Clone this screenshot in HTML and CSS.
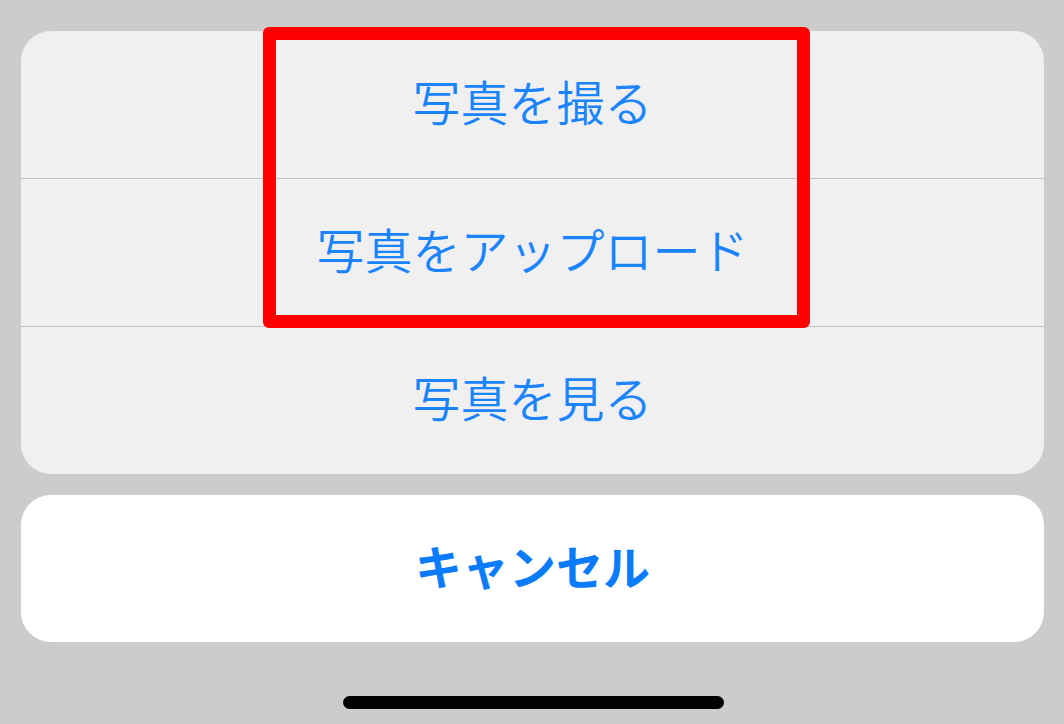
FILE: index.html
```html
<!DOCTYPE html>
<html lang="ja">
<head>
<meta charset="utf-8">
<link rel="stylesheet" href="styles.css">
</head>
<body>
<div class="screen">
  <div class="sheet">
    <div class="group">
      <div class="action">写真を撮る</div>
      <div class="sep"></div>
      <div class="action">写真をアップロード</div>
      <div class="sep"></div>
      <div class="action">写真を見る</div>
    </div>
    <div class="cancel">キャンセル</div>
  </div>
  <div class="home"></div>
  <div class="highlight"></div>
</div>
</body>
</html>
```
FILE: styles.css
```css
html, body {
  margin: 0;
  padding: 0;
  background: #cccccc;
}
.screen {
  position: relative;
  width: 1064px;
  height: 724px;
  overflow: hidden;
  font-family: "Noto Sans CJK JP", "Noto Sans", sans-serif;
}
.sheet {
  display: flex;
  flex-direction: column;
  gap: 21px;
  padding: 31px 20px 0 21px;
}
.group {
  background: #f0f0f0;
  border-radius: 30px;
  overflow: hidden;
  display: flex;
  flex-direction: column;
}
.action {
  height: 147px;
  box-sizing: border-box;
  padding-bottom: 9px;
  display: flex;
  align-items: center;
  justify-content: center;
  color: #1a84fc;
  font-size: 48px;
  font-weight: 350;
}
.sep {
  height: 1px;
  background: #c2c2c2;
}
.cancel {
  height: 147px;
  box-sizing: border-box;
  padding-bottom: 8px;
  background: #ffffff;
  border-radius: 30px;
  display: flex;
  align-items: center;
  justify-content: center;
  color: #0a7cfb;
  font-size: 47px;
  font-weight: 700;
}
.home {
  width: 381px;
  height: 13px;
  background: #000;
  border-radius: 7px;
  margin: 54px 0 0 343px;
}
.highlight {
  position: absolute;
  left: 263px;
  top: 27px;
  width: 547px;
  height: 301px;
  box-sizing: border-box;
  border: 13px solid #ff0000;
  border-radius: 6px;
}
```
